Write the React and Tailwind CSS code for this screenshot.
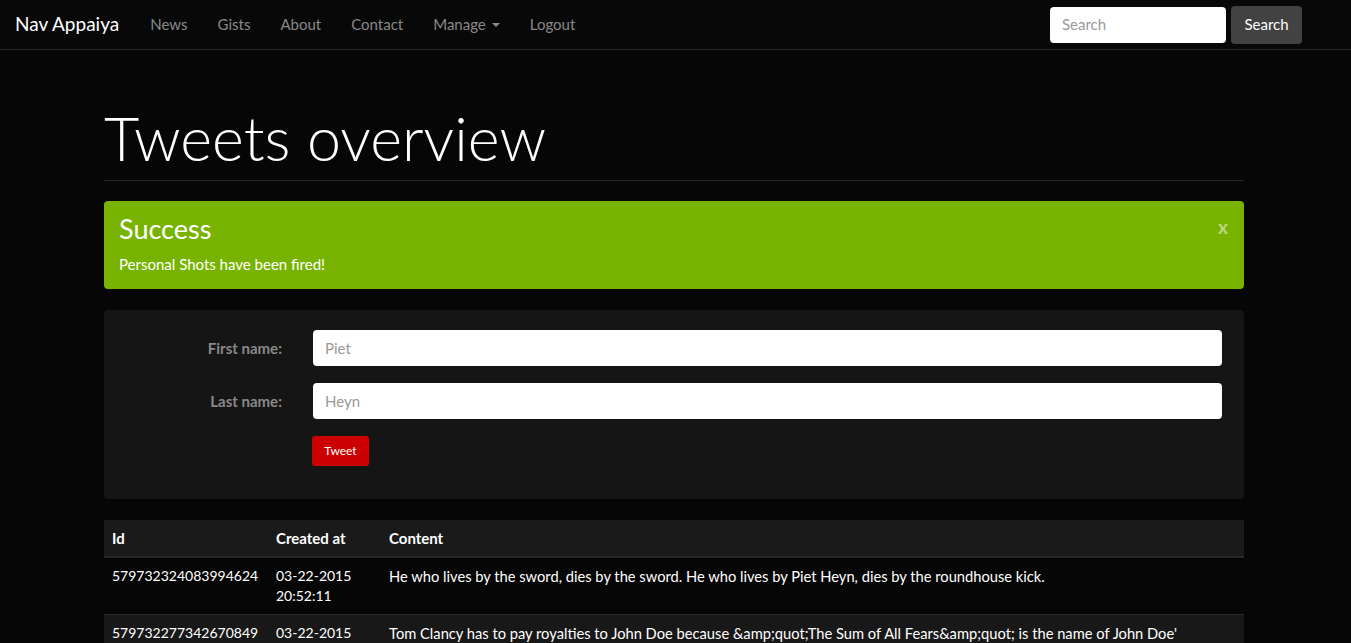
import React from 'react';

const NAV_LINKS = ['News', 'Gists', 'About', 'Contact'];

const TWEETS = [
  {
    id: '579732324083994624',
    created: ['03-22-2015', '20:52:11'],
    content: 'He who lives by the sword, dies by the sword. He who lives by Piet Heyn, dies by the roundhouse kick.',
  },
  {
    id: '579732277342670849',
    created: ['03-22-2015', '20:52:00'],
    content: "Tom Clancy has to pay royalties to John Doe because &amp;quot;The Sum of All Fears&amp;quot; is the name of John Doe' autobiography.",
  },
];

const Navbar = () => (
  <div className="h-[50px] bg-[#080808] border-b border-[#282828] flex items-center pr-[49px]">
    <span className="pl-[15px] pr-[16px] text-[19px] text-white">Nav Appaiya</span>
    {NAV_LINKS.map((l) => (
      <span key={l} className="px-[15px] text-[15px] text-[#888]">{l}</span>
    ))}
    <span className="px-[15px] text-[15px] text-[#888] flex items-center gap-[6px]">
      Manage
      <svg width="8" height="4" viewBox="0 0 8 4"><path d="M0 0h8L4 4z" fill="#888" /></svg>
    </span>
    <span className="px-[15px] text-[15px] text-[#888]">Logout</span>
    <div className="ml-auto flex items-center gap-[5px]">
      <div className="w-[176px] h-[36px] bg-white rounded-[4px] px-[12px] flex items-center text-[15px] text-[#999]">Search</div>
      <div className="w-[71px] h-[38px] bg-[#424242] rounded-[4px] flex items-center justify-center text-[15px] text-white">Search</div>
    </div>
  </div>
);

const Field = ({ label, value }) => (
  <div className="flex items-center">
    <label className="w-[178px] text-right font-bold text-[15px] text-[#888]">{label}</label>
    <div className="ml-[31px] flex-1 h-[36px] bg-white rounded-[4px] px-[12px] flex items-center text-[15px] text-[#999]">{value}</div>
  </div>
);

export default function App() {
  return (
    <div className="min-h-screen bg-[#060606] text-white" style={{ fontFamily: 'Lato, "Open Sans", sans-serif' }}>
      <Navbar />
      <div className="w-[1140px] ml-[104px]">
        <div className="mt-[55px] pb-[9px] border-b border-[#282828]">
          <h1 className="text-[61px] leading-[66px] font-light text-white">Tweets overview</h1>
        </div>

        <div className="mt-[20px] h-[88px] bg-[#77b300] rounded-[4px] px-[15px] pt-[12px] relative">
          <div className="text-[27px] leading-[32px] text-white">Success</div>
          <div className="mt-[8px] text-[15px] text-white">Personal Shots have been fired!</div>
          <span className="absolute right-[16px] top-[16px] text-[19px] font-bold leading-none text-white/50">x</span>
        </div>

        <div className="mt-[21px] h-[189px] bg-[#151515] rounded-[4px] pt-[20px] pr-[22px] flex flex-col gap-[17px]">
          <Field label="First name:" value="Piet" />
          <Field label="Last name:" value="Heyn" />
          <div className="pl-[208px]">
            <button className="w-[57px] h-[30px] bg-[#cc0000] rounded-[3px] text-[12px] text-white">Tweet</button>
          </div>
        </div>

        <table className="mt-[21px] w-full text-left text-[15px] leading-[20px]">
          <thead>
            <tr className="bg-[#1a1a1a] border-b-2 border-[#282828]">
              <th className="w-[164px] px-[8px] py-[8px] font-bold">Id</th>
              <th className="w-[113px] px-[8px] py-[8px] font-bold">Created at</th>
              <th className="px-[8px] py-[8px] font-bold">Content</th>
            </tr>
          </thead>
          <tbody>
            {TWEETS.map((t, i) => (
              <tr key={t.id} className={`border-t border-[#282828] align-top ${i % 2 ? 'bg-[#181818]' : 'bg-[#060606]'}`}>
                <td className="px-[8px] py-[8px] text-[14px]">{t.id}</td>
                <td className="px-[8px] py-[8px] text-[14px]">{t.created[0]}<br />{t.created[1]}</td>
                <td className="px-[8px] py-[8px] text-[14.7px]">{t.content}</td>
              </tr>
            ))}
          </tbody>
        </table>
      </div>
    </div>
  );
}
